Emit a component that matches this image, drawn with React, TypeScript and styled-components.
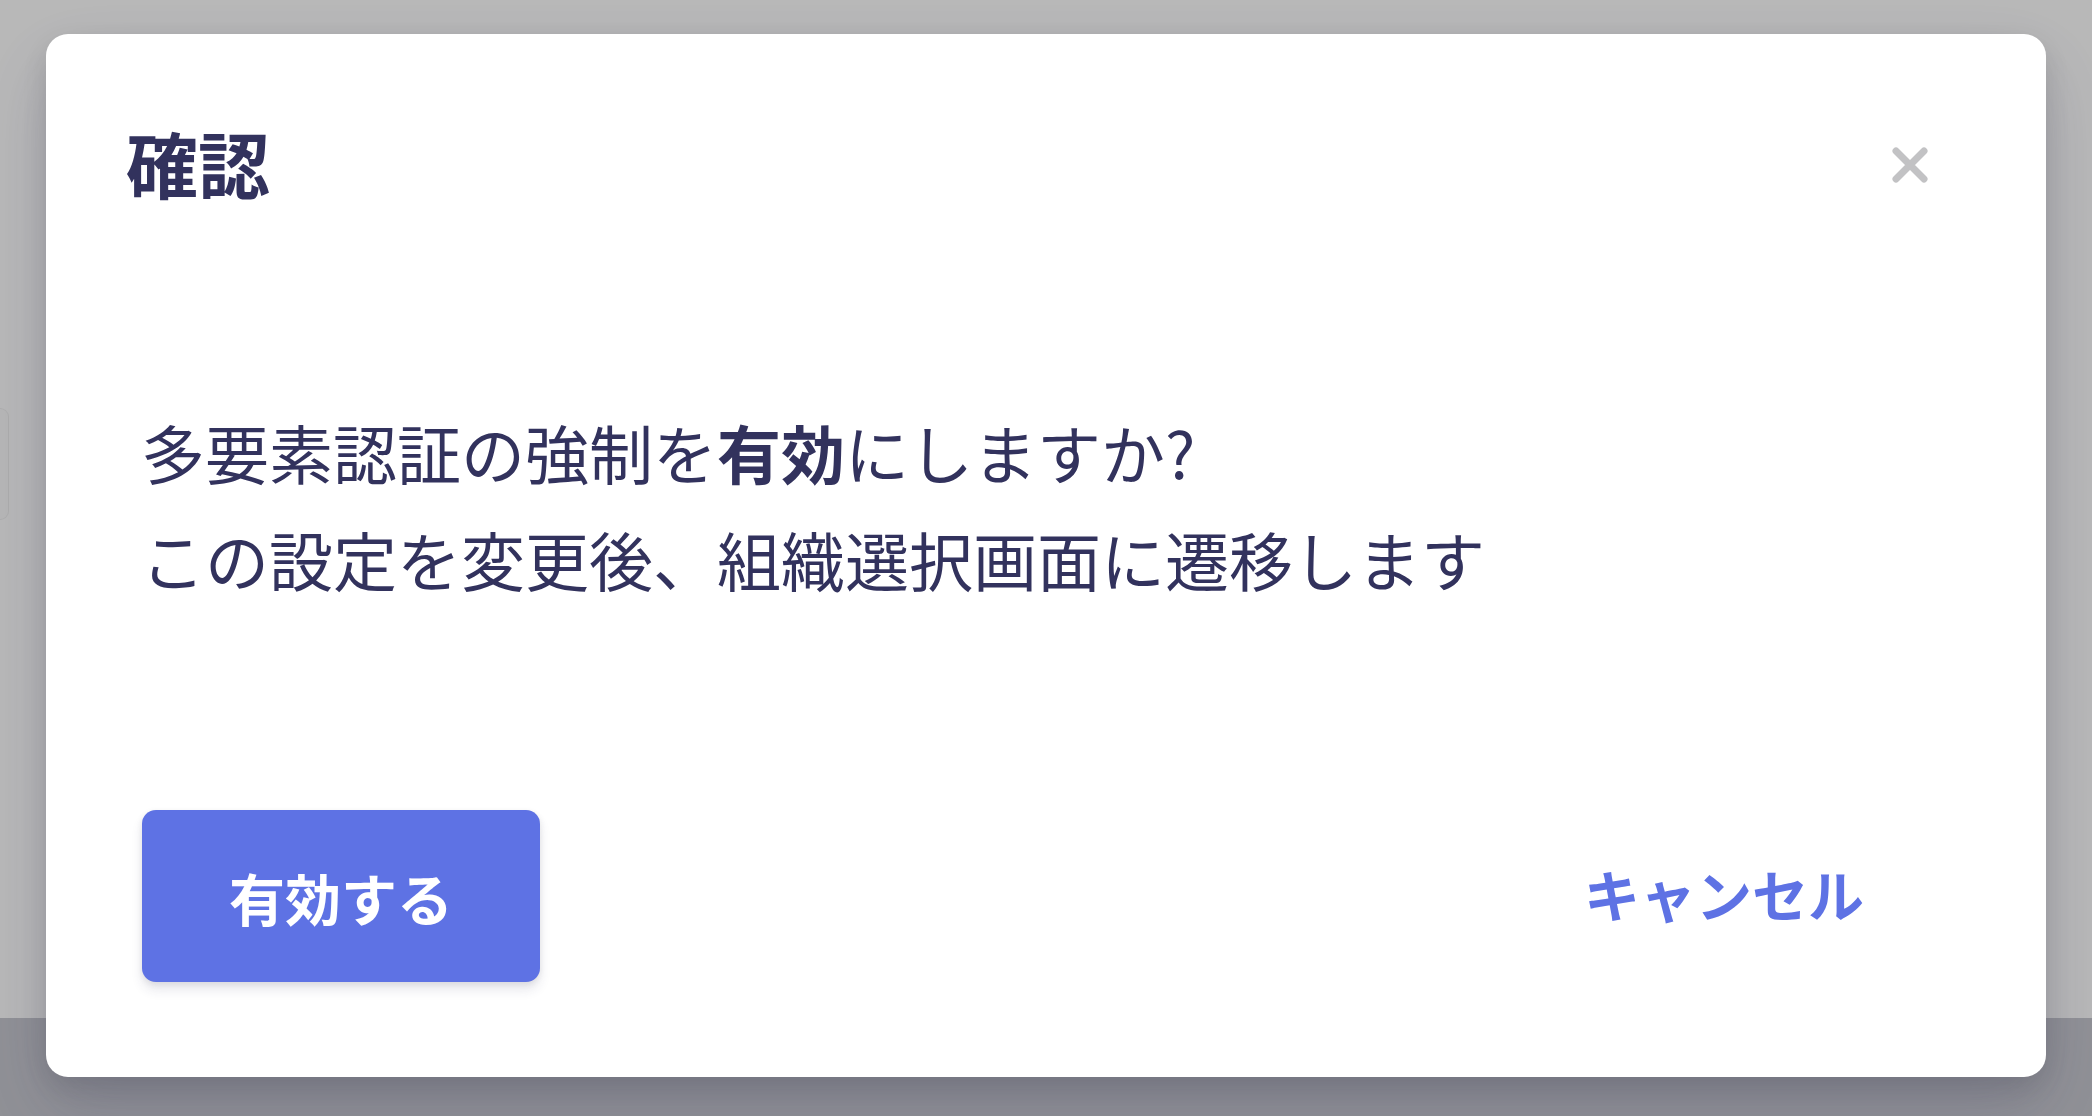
import { FC } from "react";
import styled, { createGlobalStyle } from "styled-components";

const Colors = {
  navy: "#32325d",
  primary: "#5e72e4",
  close: "#c2c2c4",
  page: "#ffffff",
  footer: "#c8c9d0",
};

const GlobalStyle = createGlobalStyle`
  html, body, #root {
    margin: 0;
    padding: 0;
    width: 100%;
    height: 100%;
  }
  body {
    font-family: "Open Sans", "Noto Sans CJK JP", sans-serif;
    overflow: hidden;
  }
`;

// underlying page, dimmed by the backdrop
const Page = styled.div`
  width: 100%;
  height: 100vh;
  display: flex;
  flex-direction: column;
  background-color: ${Colors.page};
`;

const PageMain = styled.div`
  flex: 1;
  display: flex;
  align-items: center;
  padding-bottom: 90px;
`;

const SideCard = styled.div`
  width: 8px;
  height: 110px;
  border: 1px solid rgba(0, 0, 0, 0.05);
  border-left: 0;
  border-radius: 0 14px 14px 0;
  background-color: #fdfdfd;
`;

const PageFooter = styled.div`
  height: 98px;
  background-color: ${Colors.footer};
`;

const Backdrop = styled.div`
  position: fixed;
  inset: 0;
  background-color: rgba(0, 0, 0, 0.28);
  display: flex;
  justify-content: center;
  align-items: flex-start;
  padding-top: 34px;
  box-sizing: border-box;
`;

const Modal = styled.div`
  width: 2000px;
  box-sizing: border-box;
  background-color: #fff;
  border-radius: 22px;
  box-shadow: 0 30px 70px rgba(50, 50, 93, 0.2), 0 10px 30px rgba(0, 0, 0, 0.12);
  display: flex;
  flex-direction: column;
  font-family: "Noto Sans CJK JP", "Open Sans", sans-serif;
  color: ${Colors.navy};
`;

const Header = styled.div`
  display: flex;
  justify-content: space-between;
  align-items: center;
  padding: 92px 118px 0 80px;
`;

const Title = styled.h5`
  margin: 0;
  font-size: 72px;
  line-height: 72px;
  font-weight: 700;
  color: ${Colors.navy};
`;

const CloseButton = styled.button`
  border: 0;
  background: none;
  padding: 0;
  margin-top: 5px;
  width: 36px;
  height: 38px;
  display: flex;
  align-items: center;
  justify-content: center;
  cursor: pointer;
`;

const Body = styled.div`
  padding: 200px 80px 0 95px;
  font-size: 64px;
  line-height: 107px;
  font-weight: 400;
`;

const Line = styled.p`
  margin: 0;
  white-space: nowrap;

  strong {
    font-weight: 700;
  }
`;

const Footer = styled.div`
  display: flex;
  justify-content: space-between;
  align-items: center;
  padding: 198px 118px 95px 96px;
`;

const PrimaryButton = styled.button`
  width: 398px;
  height: 172px;
  border: 0;
  border-radius: 14px;
  background-color: ${Colors.primary};
  color: #fff;
  font-family: "Noto Sans CJK JP", sans-serif;
  font-size: 56px;
  font-weight: 700;
  box-shadow: 0 8px 12px rgba(50, 50, 93, 0.11), 0 2px 6px rgba(0, 0, 0, 0.08);
  cursor: pointer;
`;

const LinkButton = styled.button`
  height: 172px;
  padding: 0 64px 8px;
  border: 0;
  background: none;
  color: ${Colors.primary};
  font-family: "Noto Sans CJK JP", sans-serif;
  font-size: 56px;
  font-weight: 700;
  cursor: pointer;
`;

const CloseIcon: FC = () => (
  <svg width="36" height="38" viewBox="0 0 36 38">
    <path
      d="M4 5 L32 33 M32 5 L4 33"
      stroke={Colors.close}
      strokeWidth="7"
      strokeLinecap="round"
    />
  </svg>
);

export default function App() {
  return (
    <>
      <GlobalStyle />
      <Page>
        <PageMain>
          <SideCard />
        </PageMain>
        <PageFooter />
      </Page>
      <Backdrop>
        <Modal>
          <Header>
            <Title>確認</Title>
            <CloseButton aria-label="Close">
              <CloseIcon />
            </CloseButton>
          </Header>
          <Body>
            <Line>
              多要素認証の強制を<strong>有効</strong>にしますか?
            </Line>
            <Line>この設定を変更後、組織選択画面に遷移します</Line>
          </Body>
          <Footer>
            <PrimaryButton>有効する</PrimaryButton>
            <LinkButton>キャンセル</LinkButton>
          </Footer>
        </Modal>
      </Backdrop>
    </>
  );
}
